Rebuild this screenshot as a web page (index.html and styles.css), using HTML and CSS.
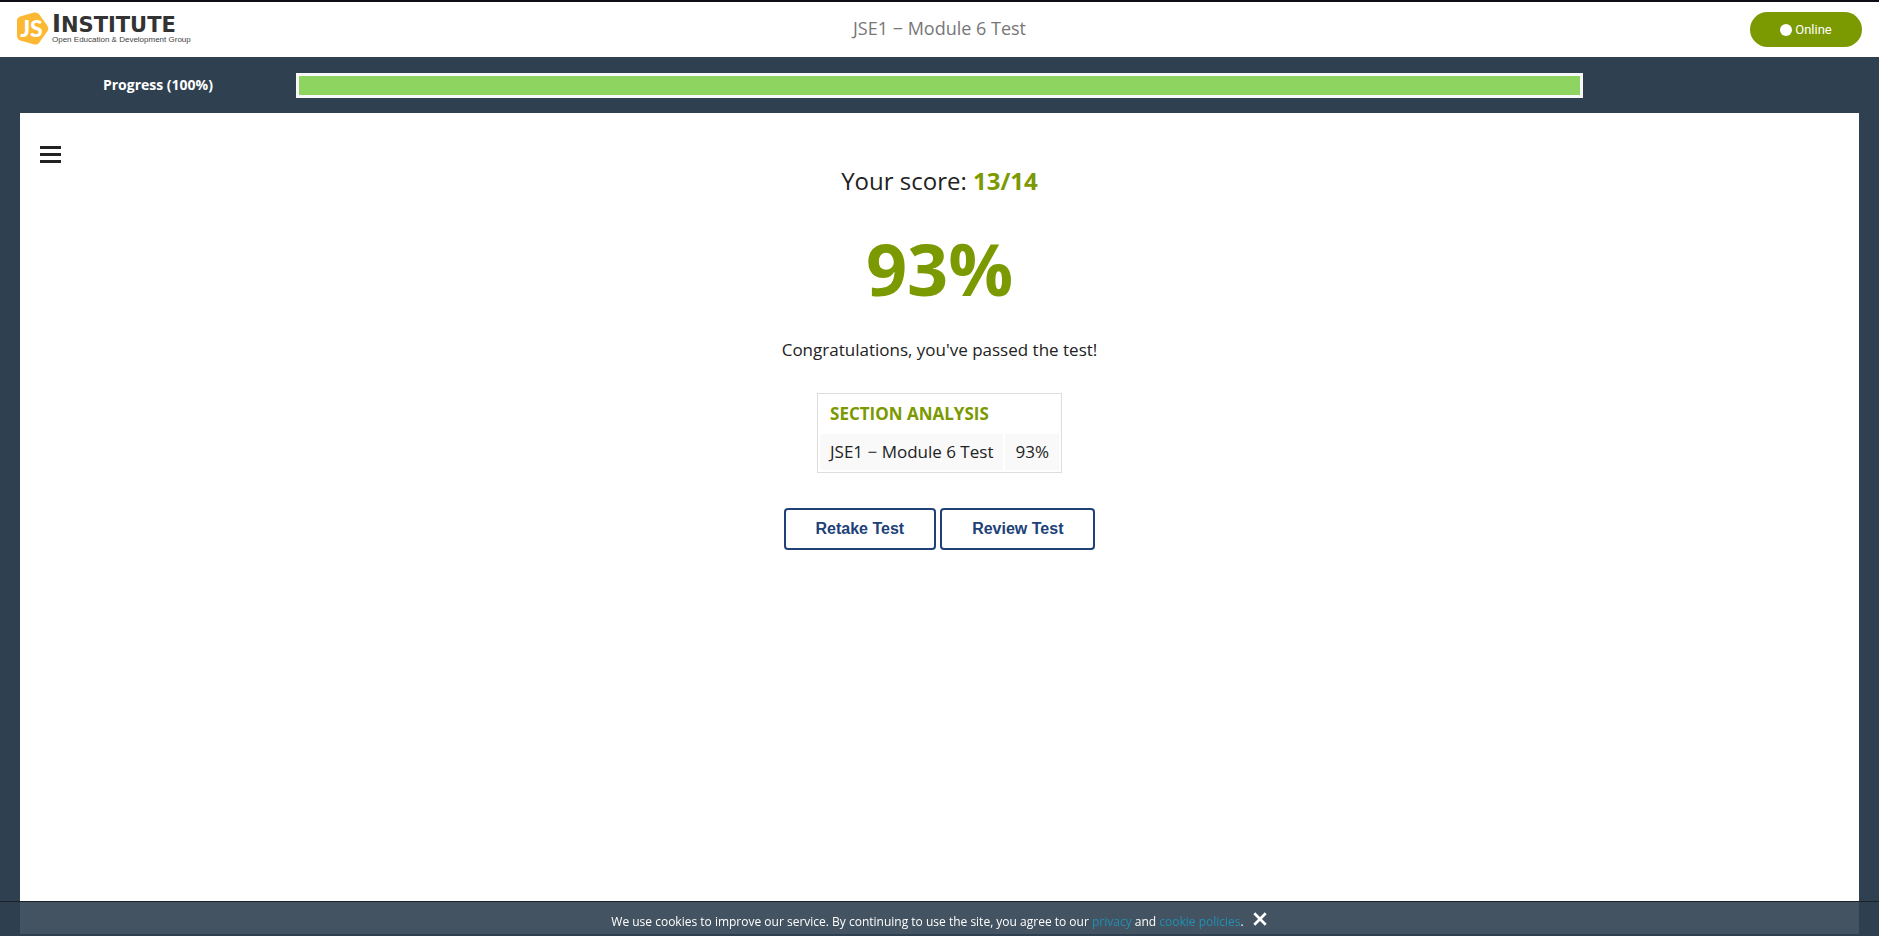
FILE: index.html
```html
<!DOCTYPE html>
<html lang="en">
<head>
<meta charset="utf-8">
<title>JSE1 − Module 6 Test</title>
<link rel="stylesheet" href="styles.css">
</head>
<body>
<header class="header">
  <a class="logo" href="#" aria-label="JS Institute">
    <svg class="logo-mark" viewBox="0 0 32 33" aria-hidden="true">
      <path fill="#fdb833" d="M3 4.500 17 .5Q20 0 22 2L30.500 14Q32 16.500 30.500 19L22 31Q20.500 33 17.500 32.500L3 28.500Q.3 27.500 0 24.500V8Q.3 5.500 3 4.500Z"/>
      <text class="mark-text" x="14.500" y="24.500" text-anchor="middle">JS</text>
    </svg>
    <span class="logo-words">
      <span class="logo-name"><span class="logo-initial">I</span>NSTITUTE</span>
      <span class="logo-tag">Open Education &amp; Development Group</span>
    </span>
  </a>
  <h1 class="title">JSE1 − Module 6 Test</h1>
  <div class="status"><span class="dot"></span>Online</div>
</header>
<section class="progress">
  <div class="progress-label" id="progress-label">Progress (100%)</div>
  <div class="bar" role="progressbar" aria-labelledby="progress-label" aria-valuenow="100"><div class="bar-fill" style="width:100%"></div></div>
</section>
<main class="panel">
  <button class="menu" type="button" aria-label="Menu"><span></span><span></span><span></span></button>
  <div class="result">
    <p class="score">Your score: <strong>13/14</strong></p>
    <p class="percent">93%</p>
    <p class="message">Congratulations, you've passed the test!</p>
    <table class="analysis">
      <thead><tr><th colspan="2">SECTION ANALYSIS</th></tr></thead>
      <tbody><tr><td>JSE1 − Module 6 Test</td><td>93%</td></tr></tbody>
    </table>
    <div class="actions">
      <button class="btn" type="button">Retake Test</button>
      <button class="btn" type="button">Review Test</button>
    </div>
  </div>
</main>
<footer class="cookies">
  <p>We use cookies to improve our service. By continuing to use the site, you agree to our <a href="#">privacy</a> and <a href="#">cookie policies</a>.</p>
  <button class="close" type="button" aria-label="Close">
    <svg viewBox="0 0 14 14" aria-hidden="true"><path d="M2 2 12 12M12 2 2 12" stroke="#fff" stroke-width="2.300"/></svg>
  </button>
</footer>
</body>
</html>
```
FILE: styles.css
```css
* { box-sizing: border-box; }
body {
  margin: 0;
  min-height: 100vh;
  display: flex;
  flex-direction: column;
  background: #2f4050;
  color: #222;
  font-family: "Open Sans", sans-serif;
}
p, h1 { margin: 0; }
button { font: inherit; cursor: pointer; }
.header {
  display: grid;
  grid-template-columns: 1fr auto 1fr;
  align-items: center;
  height: 57px;
  padding: 0 17px;
  border-top: 2px solid #110d16;
  background: #fff;
}
.logo {
  display: flex;
  align-items: center;
  gap: 3px;
  padding-bottom: 2px;
  color: #333;
  text-decoration: none;
}
.logo-mark { width: 32px; height: 33px; }
.mark-text { font: 900 23px Lato, sans-serif; fill: #fff; }
.logo-words { display: flex; flex-direction: column; padding-top: 2px; }
.logo-name { font: bold 21px/20px "DejaVu Sans", sans-serif; }
.logo-initial { font-size: 24px; }
.logo-tag { font: 8px/10px "Liberation Sans", Arial, sans-serif; color: #444; }
.title { padding-bottom: 4px; font-size: 18px; line-height: 24px; font-weight: 400; color: #777; }
.status {
  justify-self: end;
  display: flex;
  align-items: center;
  justify-content: center;
  gap: 3px;
  width: 112px;
  height: 35px;
  border-radius: 18px;
  background: #7b9900;
  color: #fff;
  font: 13px/16px Roboto, sans-serif;
}
.dot { width: 12px; height: 12px; border-radius: 50%; background: #fff; }
.progress {
  display: grid;
  grid-template-columns: 15fr 70fr 15fr;
  align-items: center;
  height: 56px;
  padding: 0 20px;
}
.progress-label { text-align: center; color: #fff; font-size: 14px; line-height: 20px; font-weight: 700; }
.bar { height: 25px; border: 3px solid #f8f8fa; }
.bar-fill { height: 100%; background: #8dd460; }
.panel {
  flex: 1;
  display: grid;
  grid-template-columns: 1fr auto 1fr;
  align-items: start;
  margin: 0 20px 2px;
  padding: 33px 20px 60px;
  background: #fff;
}
.menu {
  display: flex;
  flex-direction: column;
  gap: 4px;
  width: 21px;
  padding: 0;
  border: 0;
  background: none;
}
.menu span { height: 3px; background: #222; }
.result {
  display: flex;
  flex-direction: column;
  align-items: center;
  padding-top: 19px;
}
.score { font-size: 24px; line-height: 32px; }
.score strong, .percent { color: #7b9900; font-weight: 700; }
.percent { margin-top: 23px; font-size: 72px; line-height: 96px; }
.message { margin-top: 22px; font-size: 17px; line-height: 24px; }
.analysis {
  margin-top: 31px;
  border: 1px solid #ddd;
  border-spacing: 2px;
  font-size: 17px;
  line-height: 24px;
}
.analysis th { padding: 6px 10px; text-align: left; color: #7b9900; }
.analysis td { padding: 6px 10px; background: #f9f9f9; }
.actions { display: flex; gap: 4px; margin-top: 35px; }
.btn {
  height: 42px;
  padding: 0 30px;
  border: 2px solid #204178;
  border-radius: 4px;
  background: #fff;
  color: #204178;
  font: bold 16px "Liberation Sans", Arial, sans-serif;
}
.cookies {
  position: fixed;
  left: 0;
  right: 0;
  bottom: 0;
  display: flex;
  align-items: center;
  justify-content: center;
  gap: 8px;
  height: 35px;
  border-top: 1px solid #1c2227;
  background: rgba(47, 64, 80, 0.9);
  color: #fff;
  font-size: 12px;
  line-height: 18px;
}
.cookies p { padding-top: 6px; }
.cookies a { color: #2090b4; text-decoration: none; }
.close { width: 16px; height: 16px; padding: 0; border: 0; background: none; }
.close svg { display: block; }
```
